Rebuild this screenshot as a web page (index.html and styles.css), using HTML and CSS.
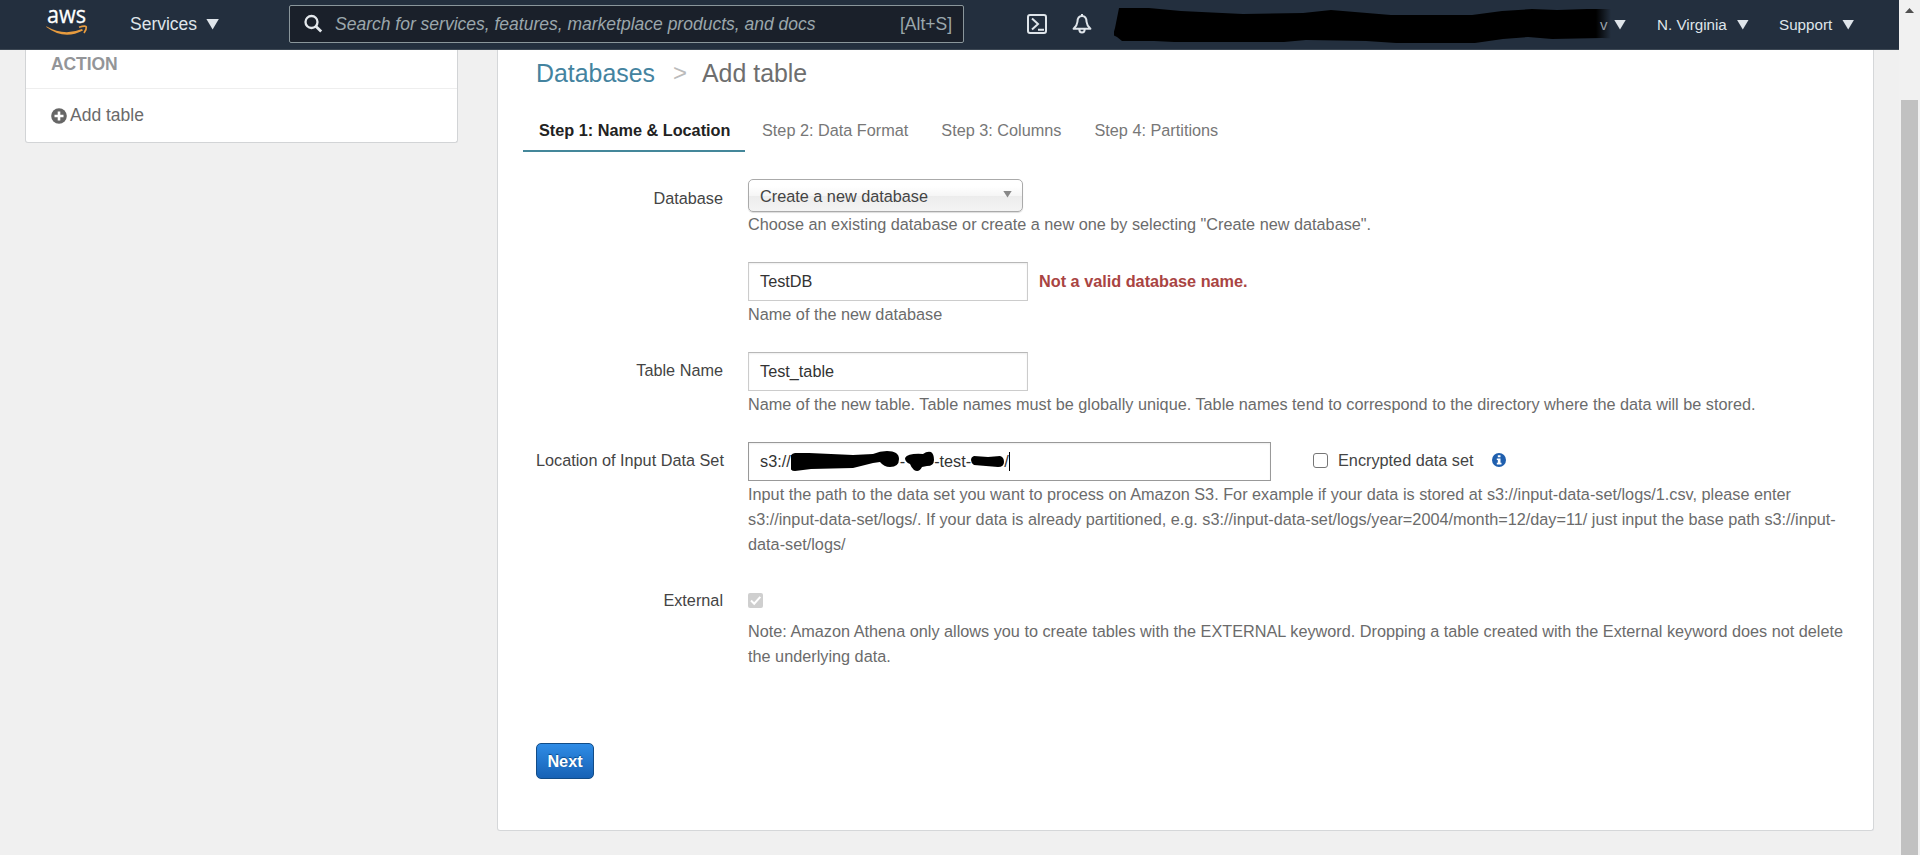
FILE: index.html
```html
<!DOCTYPE html>
<html lang="en">
<head>
<meta charset="utf-8">
<title>Add table</title>
<link rel="stylesheet" href="styles.css">
</head>
<body>
<div class="view">
  <div class="app">
    <header class="nav">
      <svg class="logo" width="42" height="28" viewBox="0 0 42 28">
        <text class="logo-text" x="1" y="14" textLength="39" lengthAdjust="spacingAndGlyphs">aws</text>
        <path d="M.3 17.3Q18 27.5 36 20L37 21.5Q18 31.5.3 18z" fill="#e79b3e"/>
        <path d="M33 18.3Q40 16.2 40.3 18 40.6 20.5 38 24" fill="none" stroke="#e79b3e" stroke-width="1.7"/>
      </svg>
      <div class="services">Services <i class="caret"></i></div>
      <div class="search">
        <svg width="20" height="20" viewBox="0 0 20 20"><circle cx="7.5" cy="8" r="6" fill="none" stroke="#e4e8ec" stroke-width="2.3"/><path d="M11.8 12.3L17.2 17.6" stroke="#e4e8ec" stroke-width="2.8"/></svg>
        <span class="search-hint">Search for services, features, marketplace products, and docs</span>
        <span class="key">[Alt+S]</span>
      </div>
      <svg class="shell" width="20" height="20" viewBox="0 0 20 20" fill="none" stroke="#dfe5ea" stroke-width="2"><rect x="1" y="1" width="18" height="18" rx="2"/><path d="M5 4.5l6 5.5-6 5.5M11 15.8h6"/></svg>
      <svg class="bell" width="20" height="20" viewBox="0 0 20 20" fill="none" stroke="#dfe5ea" stroke-width="2" stroke-linejoin="round"><path d="M10 2C6.6 2 5.5 4.5 5.4 8 5.2 11 4 12.5 1.6 14.8h16.8C16 12.5 14.8 11 14.6 8 14.5 4.5 13.4 2 10 2zM10 0v2M7.3 15c0 4.8 5.4 4.8 5.4 0"/></svg>
      <div class="account">
        <svg width="500" height="40" viewBox="0 0 500 40">
          <defs><linearGradient id="fade" gradientUnits="userSpaceOnUse" x1="482" y1="0" x2="497" y2="0"><stop offset="0" stop-color="#000"/><stop offset="1" stop-color="#000" stop-opacity="0"/></linearGradient></defs>
          <path d="M5 3l30 0 32 3 62 3 60-1 28-3 60 5h81l30-4 30-2 25 1 30-1h30q14 3 22 11v11l-7 8-30-1-50 1-24-2-25 2-28 4-79 0-30-2-60-1-22 2H60l-20-1H8l-5-4-4-2 2-7z" fill="url(#fade)"/>
          <text class="account-end" x="486" y="25">v</text>
        </svg>
        <i class="caret small"></i>
      </div>
      <div class="region">N. Virginia <i class="caret small"></i></div>
      <div class="support">Support <i class="caret small"></i></div>
    </header>
    <div class="body">
      <aside class="side">
        <div class="side-title">ACTION</div>
        <div class="side-item">
          <svg width="16" height="16" viewBox="0 0 16 16"><circle cx="8" cy="8" r="7.8" fill="#666"/><path d="M8 3.5v9M3.5 8h9" stroke="#fff" stroke-width="2.6"/></svg>
          <span>Add table</span>
        </div>
      </aside>
      <main class="panel">
        <div class="crumbs"><a class="link">Databases</a><span class="sep">&gt;</span><span>Add table</span></div>
        <div class="tabs">
          <div class="tab active">Step 1: Name &amp; Location</div>
          <div class="tab">Step 2: Data Format</div>
          <div class="tab">Step 3: Columns</div>
          <div class="tab">Step 4: Partitions</div>
        </div>
        <div class="form">
          <div class="row row-db">
            <div class="label">Database</div>
            <div>
              <div class="select"><span>Create a new database</span><i></i></div>
              <div class="help">Choose an existing database or create a new one by selecting "Create new database".</div>
            </div>
          </div>
          <div class="row">
            <div class="label"></div>
            <div>
              <div class="line"><div class="input">TestDB</div><span class="error">Not a valid database name.</span></div>
              <div class="help">Name of the new database</div>
            </div>
          </div>
          <div class="row">
            <div class="label">Table Name</div>
            <div>
              <div class="input">Test_table</div>
              <div class="help">Name of the new table. Table names must be globally unique. Table names tend to correspond to the directory where the data will be stored.</div>
            </div>
          </div>
          <div class="row row-loc">
            <div class="label">Location of Input Data Set</div>
            <div>
              <div class="line">
                <div class="input wide">
                  <span>s3://</span>
                  <svg class="scrub" width="109" height="24" viewBox="0 0 109 24"><path d="M4 5h14l44 2 20-1q7-3 14-3 12 0 12 8 0 8-9 8-6 0-10-5l-7 1-20 5-42 1-16 2q-5 0-5-5 1-3 0-5-1-7 5-8z"/></svg>
                  <span>-</span>
                  <svg class="scrub" width="29" height="24" viewBox="0 0 29 24"><path d="M0 10Q3 5 18 6q4-3 8-2 3 2 3 8 0 6-7 6l-5 1q-3 6-8 3-3-3-4-6Q0 14 0 10z"/></svg>
                  <span>-test-</span>
                  <svg class="scrub" width="33" height="24" viewBox="0 0 33 24"><path d="M3 8l14 1 12-1q4 1 4 6 0 5-6 5l-12-1-12-1Q0 15 0 12 0 9 3 8z"/></svg>
                  <span>/</span><b class="cursor"></b>
                </div>
                <i class="check"></i>
                <span class="check-label">Encrypted data set</span>
                <svg class="info" width="14" height="14" viewBox="0 0 14 14"><circle cx="7" cy="7" r="7" fill="#1f5fae"/><path d="M5.8 2.2h2.7v2H5.8zM4.8 5.4h3.7v4.4h1v1.7H4.8V9.8h1V7h-1z" fill="#fff"/></svg>
              </div>
              <div class="help">Input the path to the data set you want to process on Amazon S3. For example if your data is stored at s3://input-data-set/logs/1.csv, please enter<br>s3://input-data-set/logs/. If your data is already partitioned, e.g. s3://input-data-set/logs/year=2004/month=12/day=11/ just input the base path s3://input-<br>data-set/logs/</div>
            </div>
          </div>
          <div class="row row-ext">
            <div class="label">External</div>
            <div>
              <svg class="checked" width="15" height="15" viewBox="0 0 15 15"><rect width="15" height="15" rx="2" fill="#cfcfcf"/><path d="M3 7.5l3.2 3.2L12.3 3.8" fill="none" stroke="#fff" stroke-width="2"/></svg>
              <div class="help">Note: Amazon Athena only allows you to create tables with the EXTERNAL keyword. Dropping a table created with the External keyword does not delete<br>the underlying data.</div>
            </div>
          </div>
        </div>
        <div class="next">Next</div>
      </main>
    </div>
  </div>
  <div class="scrollbar"><i class="up"></i><div class="thumb"></div></div>
</div>
</body>
</html>
```
FILE: styles.css
```css
* { box-sizing: border-box; }
body { margin: 0; font: 16.25px/25px "Liberation Sans", Arial, sans-serif; color: #444; background: #f0f0f0; overflow: hidden; }
svg { display: block; flex: none; }
.view { display: flex; width: 1920px; height: 855px; }
.app { width: 1899px; display: flex; flex-direction: column; }
.nav { height: 50px; flex: none; display: flex; align-items: center; background: #232f3e; border-bottom: 1px solid #3d4854; color: #dfe5ea; white-space: nowrap; }
.logo { margin: -3px 0 0 46px; overflow: visible; }
.logo-text { font: 23px "Open Sans", sans-serif; fill: #fff; stroke: #fff; stroke-width: .3px; }
.services { width: 159px; margin-left: 42px; font-size: 17.5px; display: flex; align-items: center; gap: 9px; margin-top: -1px; }
.caret { width: 13px; height: 11px; background: currentColor; clip-path: polygon(0 0, 100% 0, 50% 100%); }
.caret.small { width: 12px; height: 10px; }
.search { width: 675px; height: 38px; display: flex; align-items: center; border: 1px solid #8a969b; border-radius: 2px; background: #1a202a; color: #9ba7ac; font-size: 17.5px; padding: 0 11px 0 14px; margin-top: -1px; }
.search-hint { margin-left: 11px; font-style: italic; }
.key { margin-left: auto; }
.shell { margin: -1px 0 0 63px; }
.bell { margin: -1px 0 0 25px; }
.account { margin-left: 22px; display: flex; align-items: center; width: 543px; }
.account-end { font-size: 15px; fill: #9aa1a8; }
.region, .support { display: flex; align-items: center; gap: 10px; font-size: 15.2px; }
.region { width: 122px; }
.body { display: flex; flex: 1; align-items: flex-start; }
.side { width: 433px; height: 93px; margin-left: 25px; background: #fff; border: 1px solid #d2d4d6; border-top: 0; border-radius: 0 0 3px 3px; font-size: 17.5px; color: #6a6a6a; }
.side-title { height: 39px; padding: 2px 0 0 25px; color: #939598; font-weight: bold; letter-spacing: -.1px; border-bottom: 1px solid #eee; }
.side-item { display: flex; align-items: center; gap: 3px; padding: 14px 0 0 25px; }
.panel { width: 1377px; height: 781px; margin-left: 39px; padding: 8px 0 0 25px; background: #fff; border: 1px solid #d5d7d9; border-top: 0; border-radius: 0 0 3px 3px; white-space: nowrap; }
.crumbs { display: flex; height: 28px; padding-left: 13px; line-height: 30px; font-size: 24.9px; color: #6e6e6e; }
.link { color: #44839f; }
.sep { margin: 0 15px 0 18px; font-size: 24px; color: #bbb; }
.tabs { display: flex; margin-top: 32px; color: #777; }
.tab { height: 34px; line-height: 25px; padding: 0 16px 0 17px; }
.tab.active { width: 222px; padding: 0 0 0 16px; color: #222; font-weight: bold; border-bottom: 2px solid #44879a; }
.form { padding: 27px 0 0 13px; }
.row { display: grid; grid-template-columns: 187px 1fr; column-gap: 25px; height: 90px; }
.row-db { height: 83px; }
.row-db .label { padding-top: 7px; }
.row-loc { height: 146px; }
.label { text-align: right; padding-top: 6px; }
.help { color: #6b6b6b; }
.row:not(.row-db) .help { padding-top: 1px; }
.select { width: 275px; height: 33px; padding: 1px 10px 0 11px; display: flex; align-items: center; justify-content: space-between; border: 1px solid #aaa; border-radius: 5px; background: linear-gradient(#fff 20%, #f6f6f6 50%, #ececec 52%, #f4f4f4); box-shadow: 0 1px 1px #ddd; }
.select i { width: 9px; height: 7px; background: #888; clip-path: polygon(0 0, 100% 0, 50% 100%); margin-top: -4px; }
.line { display: flex; align-items: center; }
.input { width: 280px; height: 39px; padding: 0 11px; display: flex; align-items: center; border: 1px solid #ccc; border-top-color: #b8b8b8; box-shadow: inset 0 1px 2px #eee; color: #333; flex: none; }
.input.wide { width: 523px; border-color: #999; }
.scrub { fill: #000; margin-top: -3px; }
.cursor { width: 1px; height: 19px; background: #000; }
.error { margin-left: 11px; font-weight: bold; color: #a94442; }
.check { width: 15px; height: 15px; border: 1.5px solid #767676; border-radius: 3px; margin: -3px 0 0 42px; }
.check-label { margin: -3px 0 0 10px; }
.info { margin: -3px 0 0 18px; }
.row-ext .label { padding-top: 0; }
.checked { margin: 5px 0 10px; }
.row-ext { height: 155px; }
.next { width: 58px; height: 36px; margin-left: 13px; line-height: 35px; text-align: center; font-weight: bold; color: #fff; text-shadow: 0 -1px 1px #0a4a8a; border: 1px solid #124c87; border-radius: 5px; background: linear-gradient(#2f8ce6, #1762b5); }
.scrollbar { width: 21px; background: #f1f1f1; padding: 8px 2px 0; display: flex; flex-direction: column; align-items: center; }
.up { width: 9px; height: 5px; background: #505050; clip-path: polygon(50% 0, 100% 100%, 0 100%); }
.thumb { width: 17px; margin-top: 87px; flex: 1; background: #c1c1c1; }
```
